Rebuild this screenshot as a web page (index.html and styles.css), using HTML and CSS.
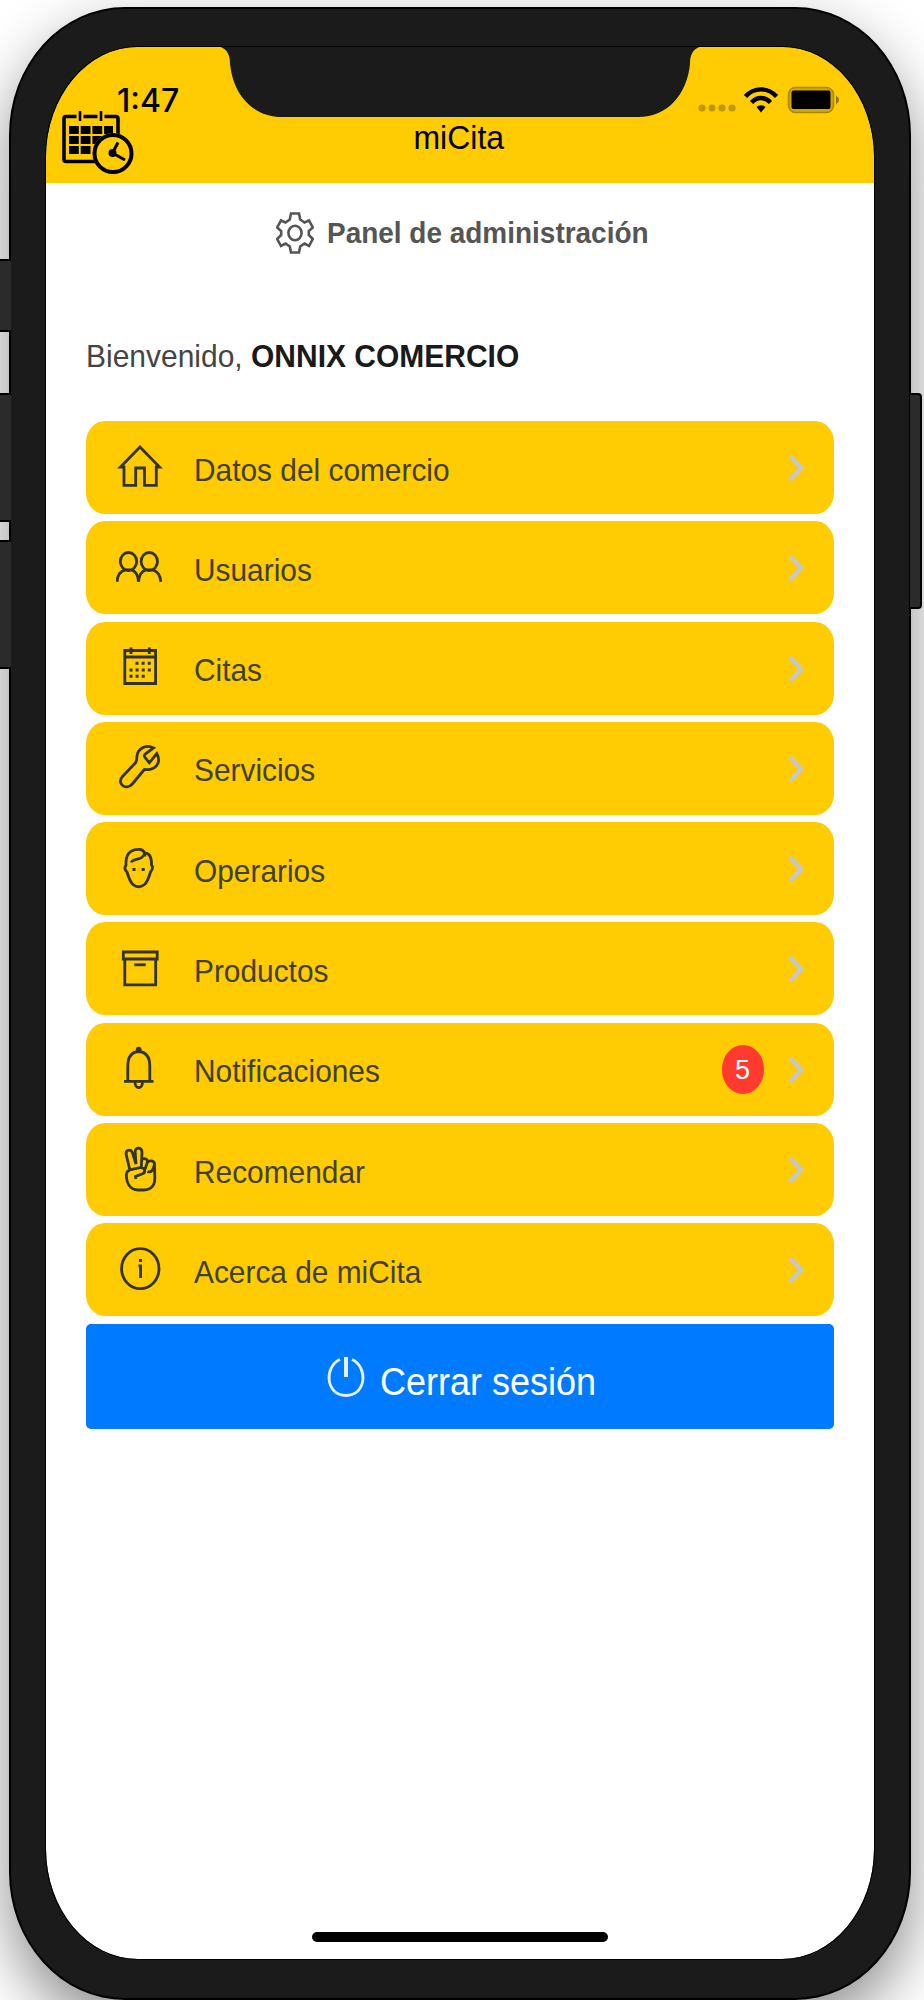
FILE: index.html
```
<!DOCTYPE html>
<html lang="es">
<head>
  <meta charset="UTF-8" />
  <meta name="viewport" content="width=device-width, initial-scale=1" />
  <title>miCita – Panel de administración</title>
  <link rel="stylesheet" href="styles.css">
</head>
<body>

<div class="phone">
  <span class="side-button mute"></span>
  <span class="side-button vol-up"></span>
  <span class="side-button vol-down"></span>
  <span class="side-button power"></span>

  <div class="screen">
    <svg class="notch" width="488" height="72" viewBox="0 0 488 72">
      <path d="M0 0 C9 1 14 6 14 18 C17 48 36 71 66 71 H422 C452 71 471 48 474 18 C474 6 479 1 488 0 Z" />
    </svg>

    <header>
      <div class="status-bar">
        <span class="time">1:47</span>
        <svg class="status-icons" width="146" height="30" viewBox="0 0 146 30">
          <g opacity=".25">
            <circle cx="7" cy="23" r="3.6" /><circle cx="17" cy="23" r="3.6" />
            <circle cx="27" cy="23" r="3.6" /><circle cx="37" cy="23" r="3.6" />
          </g>
          <g fill="none" stroke="#000" stroke-width="4.4">
            <path d="M50.5 11.5 C59 2 73 2 81.500 11.500" />
            <path d="M56.500 17.500 C62 11.500 70 11.500 75.500 17.500" />
          </g>
          <path d="M61.500 22 Q66 18.500 70.500 22 L66 27.500 Z" />
          <rect x="93.500" y="2.500" width="45" height="25" rx="7" fill="#d2a803" stroke="#a98703" stroke-width="1.500" />
          <rect x="96.500" y="5.500" width="39" height="18.500" rx="2" />
          <path d="M141 10.500 Q147 15 141 19.500 Z" fill="#8f7200" />
        </svg>
      </div>
      <div class="title-bar">
        <svg class="logo" width="74" height="66" viewBox="0 0 74 66">
          <rect x="3" y="6.500" width="54" height="45" rx="2" fill="none" stroke="#000" stroke-width="3.600" />
          <path class="logo-gap" d="M15.500 6.500 H22.500 M36.500 6.500 H43.500" />
          <path d="M19 1 V11 M40 1 V11" stroke="#000" stroke-width="2.600" />
          <path d="M8 20 H52 M8 30 H52 M8 40 H30" fill="none" stroke="#000" stroke-width="8" stroke-dasharray="9.800 1.900" />
          <circle cx="52" cy="43.500" r="20.500" class="logo-halo" />
          <circle cx="52" cy="43.500" r="18.500" class="clock" />
          <circle cx="51.500" cy="43" r="4" />
          <path d="M51.500 43 L57 32.500 M51.500 43 L64 50" stroke="#000" stroke-width="3" />
        </svg>
        <h1><span class="txt">miCita</span></h1>
      </div>
    </header>

    <main>
      <div class="panel-title">
        <svg width="38" height="42" viewBox="0 0 38 42">
          <path d="M15 1.500 H23 L24.200 7.500 L28.500 10.500 L33 8.500 L36.800 15.500 L32.800 19 V23 L36.800 27 L33 34 L28.500 31.500 L24.200 34.500 L23 40.500 H15 L13.800 34.500 L9.500 31.500 L5 34 L1.200 27 L5.200 23 V19 L1.200 15.500 L5 8.500 L9.500 10.500 L13.800 7.500 Z" />
          <ellipse cx="19" cy="21" rx="6.600" ry="7.200" />
        </svg>
        <h2><span class="txt">Panel de administración</span></h2>
      </div>

      <p class="welcome"><span class="txt">Bienvenido, <strong>ONNIX COMERCIO</strong></span></p>

      <ul class="menu">
        <li>
          <svg class="icon" viewBox="0 0 48 48"><path d="M4.500 24 L24 4 L43.500 24 H40.300 V42.300 H28.500 V25 H19.700 V42.300 H8 V24 Z" /></svg>
          <span class="label txt">Datos del comercio</span>
          <svg class="chevron" viewBox="0 0 16 28"><path d="M2 2 L13 14 L2 26" /></svg>
        </li>
        <li>
          <svg class="icon" viewBox="0 0 48 48"><ellipse cx="12.500" cy="18.500" rx="8.200" ry="9" /><ellipse cx="33.300" cy="18.500" rx="8.200" ry="9" /><path d="M1 38.800 C1.500 31.500 5 27.800 9.500 26.800 H15.500 C19.500 28 22 31 22.500 38.800 C23 31 26 28 30 26.800 H36.500 C41 28 44.300 31.500 44.800 38.800" /></svg>
          <span class="label txt">Usuarios</span>
          <svg class="chevron" viewBox="0 0 16 28"><path d="M2 2 L13 14 L2 26" /></svg>
        </li>
        <li>
          <svg class="icon" viewBox="0 0 48 48"><path d="M8.800 7.500 H39.600 V40.500 H8.800 Z M8.800 14 H39.600 M15 4.600 V11 M33.300 4.600 V11" /><path class="dots" d="M19.500 20.300 H35 M13.500 27 H35 M13.500 33.300 H29" /></svg>
          <span class="label txt">Citas</span>
          <svg class="chevron" viewBox="0 0 16 28"><path d="M2 2 L13 14 L2 26" /></svg>
        </li>
        <li>
          <svg class="icon" viewBox="0 0 48 48"><path d="M6.500 33.500 L19.500 19.800 Q21 18 20.800 14 C21.500 5.500 30 1 37.500 5 L29.500 10.800 Q27.500 12.500 29 14.500 L33.300 19.800 L40.800 10.500 C46 20 39 28 28.500 26.300 L16.300 41 C10 48 0 40.500 6.500 33.500 Z" /></svg>
          <span class="label txt">Servicios</span>
          <svg class="chevron" viewBox="0 0 16 28"><path d="M2 2 L13 14 L2 26" /></svg>
        </li>
        <li>
          <svg class="icon" viewBox="0 0 48 48"><path d="M10 21 C9.500 11 13.500 5.500 22.500 5.300 Q27 5 28.500 8.800 C33.500 9 35.800 13 35.500 21 Q38 24 34.500 28 C33 33 31.500 38 28.500 40.500 Q22.500 45 17 40.500 C14 38 12.500 33 11 28 Q7.500 25 10 21 Z M15.300 18.500 C16 13.500 27.500 17.500 28.500 8.800 M28.500 8.800 L28.800 12.500" /><path class="dots" d="M16.500 25.500 H19.500 M25.700 25.500 H28.700" /></svg>
          <span class="label txt">Operarios</span>
          <svg class="chevron" viewBox="0 0 16 28"><path d="M2 2 L13 14 L2 26" /></svg>
        </li>
        <li>
          <svg class="icon" viewBox="0 0 48 48"><path d="M7.300 8 H41.200 V15 H7.300 Z M8.800 15 V40.800 H39.700 V15" /><path d="M18.300 20.800 H29.700" /></svg>
          <span class="label txt">Productos</span>
          <svg class="chevron" viewBox="0 0 16 28"><path d="M2 2 L13 14 L2 26" /></svg>
        </li>
        <li>
          <svg class="icon" viewBox="0 0 48 48"><path d="M8 37.400 H37.500 M11.800 37.400 V22 C11.800 12.500 16 8 22.700 7.500 C29.500 8 33.800 12.500 33.800 22 V37.400 M19 38 C19 45.500 26.500 45.500 26.500 38" /><circle cx="22.700" cy="5.700" r="1.500" /></svg>
          <span class="label txt">Notificaciones</span>
          <span class="badge">5</span>
          <svg class="chevron" viewBox="0 0 16 28"><path d="M2 2 L13 14 L2 26" /></svg>
        </li>
        <li>
          <svg class="icon" viewBox="0 0 48 48"><path d="M13.800 24.800 L10.300 10 C9 4.500 15 3.500 16.500 8 L20 19 L19.200 7 C19 1.800 26 1.800 26 7 L25.300 22.300 M26 14.500 C28.500 12.500 32.300 14 31.300 17.500 L29 24.300 M31.300 17.500 C34.500 14.500 39 16 38.500 20 L38.800 33 C39 41 34.500 45 27 45 H22 C14 44.800 10.500 38 10.300 30 C10.300 26.500 12 25 16 24.300 L24 22.700 C29 22.300 30.500 27.500 26 29 L19.500 31.500 L19.800 34 M31.500 26.500 C35 28 37.300 25 38.300 20" /></svg>
          <span class="label txt">Recomendar</span>
          <svg class="chevron" viewBox="0 0 16 28"><path d="M2 2 L13 14 L2 26" /></svg>
        </li>
        <li>
          <svg class="icon" viewBox="0 0 48 48"><ellipse cx="24.300" cy="23.700" rx="18.700" ry="20" /><path class="info" d="M22.500 20.800 H24.600 V33 M23 15.500 H26" /></svg>
          <span class="label txt">Acerca de miCita</span>
          <svg class="chevron" viewBox="0 0 16 28"><path d="M2 2 L13 14 L2 26" /></svg>
        </li>
      </ul>

      <button class="logout">
        <svg width="38" height="42" viewBox="0 0 38 42"><path d="M13 3.500 C-3 10.500 -2 39 19 39.500 C40 39 41 10.500 25 3.500" /><path class="stem" d="M19 1 V21" /></svg>
        <span class="txt">Cerrar sesión</span>
      </button>
    </main>

    <div class="home-bar"></div>
  </div>
</div>

</body>
</html>
```
FILE: styles.css
```
* {
  margin: 0; padding: 0; box-sizing: border-box;
}
body {
  height: 2000px;
  overflow: hidden;
  background: #fff;
  color: #222;
  font-family: "Liberation Sans", Arial, Helvetica, sans-serif;
}

/* device frame */
.phone {
  position: relative;
  width: 902px;
  height: 1993px;
  margin: 7px 0 0 9px;
  padding: 38px 35px 39px;
  background: #1b1b1b;
  border: 2px solid #000;
  border-radius: 116px / 128px;
  box-shadow: 0 25px 60px rgba(0,0,0,0.45);
}
.side-button {
  position: absolute;
  left: -13px;
  width: 13px;
  background: #2b2b2b;
  border: 2px solid #000;
  border-width: 2px 0;
}
.mute { top: 250px; height: 73px; }
.vol-up { top: 384px; height: 129px; }
.vol-down { top: 531px; height: 129px; }
.power {
  top: 384px;
  left: 899px;
  width: 12px;
  height: 216px;
  border-width: 2px 2px 2px 0;
  border-radius: 0 4px 4px 0;
}

.screen {
  position: relative;
  height: 100%;
  background: #fff;
  border-radius: 92px / 110px;
  overflow: hidden;
  outline: 1px solid #000;
}
.notch {
  position: absolute;
  top: -1px;
  left: 170px;
  fill: #1b1b1b;
}

/* status and title bars */
header {
  height: 136px;
  background: #ffcc04;
  color: #000;
}
.status-bar {
  display: flex;
  justify-content: space-between;
  height: 63px;
  padding: 38px 33px 0 71px;
}
.time {
  font-family: Inter, sans-serif;
  font-size: 32px;
  font-weight: 500;
  line-height: 31px;
}
.title-bar {
  display: flex;
  padding-left: 15px;
}
.title-bar h1 {
  width: 738px;
  padding: 9px 91px 0 0;
  font-size: 33px;
  font-weight: 400;
  line-height: 38px;
  text-align: center;
}
.title-bar .txt {
  display: inline-block;
  transform: scaleX(.97);
}
.logo-gap { stroke: #ffcc04; stroke-width: 5; }
.logo-halo { fill: #ffcc04; }
.clock { fill: none; stroke: #000; stroke-width: 4; }

main {
  padding: 29px 40px 0;
}
.panel-title {
  display: flex;
  gap: 13px;
  height: 42px;
  padding-left: 190px;
  color: #555;
}
.panel-title svg {
  fill: none;
  stroke: #555;
  stroke-width: 2.6;
}
.panel-title h2 {
  font-size: 29px;
  line-height: 42px;
  white-space: nowrap;
}
.panel-title .txt {
  display: inline-block;
  transform: scaleX(.964);
  transform-origin: left;
}
.welcome {
  margin-top: 83px;
  font-size: 32px;
  line-height: 38px;
  color: #444;
}
.welcome .txt {
  display: inline-block;
  transform: scaleX(.937);
  transform-origin: left;
}
.welcome strong {
  color: #1a1a1a;
}

.menu {
  display: flex;
  flex-direction: column;
  gap: 7.300px;
  list-style: none;
  margin-top: 46px;
}
.menu li {
  display: flex;
  align-items: center;
  width: 747.5px;
  height: 93px;
  padding: 0 30px;
  background: #ffcc04;
  border-radius: 19px / 21px;
}
.icon {
  width: 48px;
  height: 48px;
  margin: 0 30px 2px 0;
  fill: none;
  stroke: #33332a;
  stroke-width: 2.8;
}
.dots {
  stroke-width: 3;
  stroke-dasharray: 3 3.100;
}
.info { stroke-width: 2.800; }
.label {
  flex: 1;
  color: #43402a;
  font-size: 31.500px;
  line-height: 38px;
  padding-top: 4px;
  transform: scaleX(.948);
  transform-origin: left;
}
.badge {
  width: 42px;
  height: 49px;
  margin: 1px 24px 0 0;
  background: #ff3b30;
  border-radius: 21px / 24px;
  color: #fff;
  font-size: 27px;
  line-height: 50px;
  text-align: center;
}
.chevron {
  width: 16px;
  height: 28px;
  margin-top: 1px;
  fill: none;
  stroke: #c7c7c7;
  stroke-width: 4.600;
}

.logout {
  display: flex;
  gap: 15px;
  width: 747.5px;
  height: 105px;
  margin-top: 7.5px;
  padding: 32px 0 0 241px;
  background: #007aff;
  border: 0;
  border-radius: 5px;
  color: #fff;
  font-family: inherit;
  font-size: 38px;
  line-height: 53px;
}
.logout svg {
  fill: none;
  stroke: #e6f1ff;
  stroke-width: 2.800;
}
.logout .stem { stroke-width: 4; }
.logout .txt {
  white-space: nowrap;
  transform: scaleX(.947);
  transform-origin: left;
}

.home-bar {
  position: absolute;
  bottom: 17px;
  left: 266px;
  width: 296px;
  height: 10px;
  background: #000;
  border-radius: 5px;
}
```
